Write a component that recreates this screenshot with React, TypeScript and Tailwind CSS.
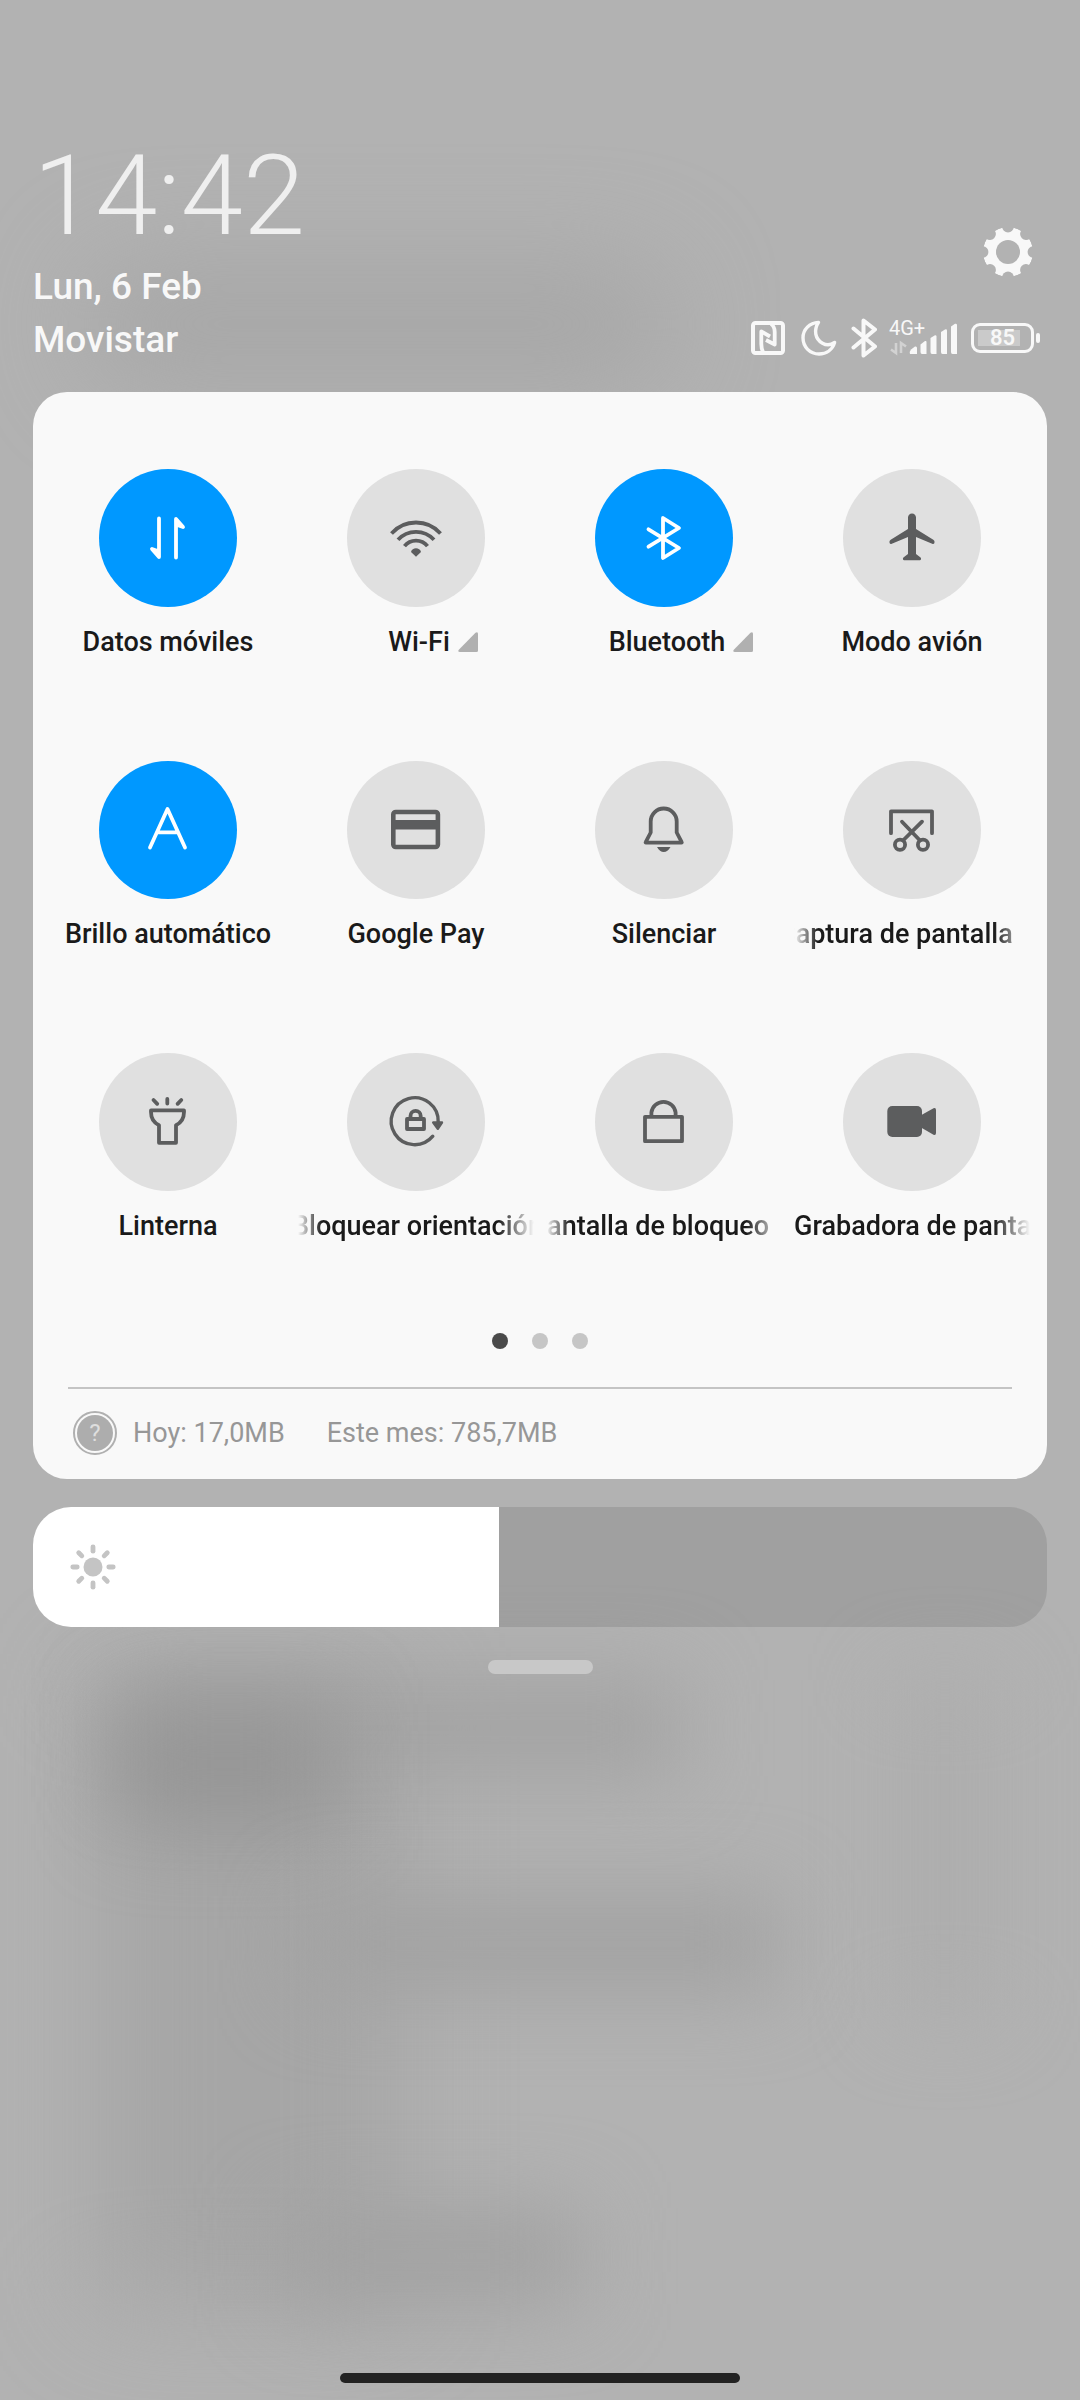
import React, { useState } from 'react';

type Tile = {
  label: string;
  icon: React.ReactNode;
  active?: boolean;
  // has a details page, shown by the small corner triangle
  expandable?: boolean;
  // how far the marquee has moved, set only for labels wider than the tile
  scroll?: number;
};

const Icon: React.FC<{ children: React.ReactNode }> = ({ children }) => (
  <svg
    viewBox="-30 -30 60 60"
    className="w-[60px] h-[60px]"
    fill="none"
    stroke="currentColor"
    strokeWidth="3.8"
    strokeLinecap="round"
    strokeLinejoin="round"
    aria-hidden="true"
  >
    {children}
  </svg>
);

const DataIcon = () => (
  <Icon>
    <path d="M-9 -19.5V19L-16 11L-9 13.5" fill="currentColor" />
    <path d="M8 19.5V-19L15 -11L8 -13.5" fill="currentColor" />
  </Icon>
);

const WifiIcon = () => (
  <Icon>
    <g strokeLinecap="butt">
      <path d="M-24.5 -4.5A32.8 32.8 0 0 1 24.5 -4.5" />
      <path d="M-18 1.8A24.3 24.3 0 0 1 18 1.8" />
      <path d="M-11.5 8.2A14.6 14.6 0 0 1 11.5 8.2" />
    </g>
    <path d="M-5 14C-4 9 4 9 5 14L0 18.8Z" fill="currentColor" stroke="none" />
  </Icon>
);

const BluetoothIcon = () => (
  <Icon>
    <path d="M-15.5 -8.7L15 10L-1 20V-20L15 -10L-15.5 8.7" />
  </Icon>
);

const PlaneIcon = () => (
  <Icon>
    <path
      d="M0 -24.5C-2.4 -24.5 -4 -22.6 -4 -20.5V-9L-21.3 1.8C-22.6 2.7 -22.8 4 -22.3 5.2C-22 6 -21.2 6.2 -20.2 5.8L-4 -1V16L-8.6 19.5C-9.6 20.6 -9 22.3 -7.8 22.3H7.8C9 22.3 9.6 20.6 8.6 19.5L4 16V-1L20.2 5.8C21.2 6.2 22 6 22.3 5.2C22.8 4 22.6 2.7 21.3 1.8L4 -9V-20.5C4 -22.6 2.4 -24.5 0 -24.5Z"
      fill="currentColor"
      stroke="none"
    />
  </Icon>
);

const AutoBrightnessIcon = () => (
  <Icon>
    <path d="M-18 17.5L-0.5 -21L17 17.5M-10 2.3H9" />
  </Icon>
);

const CardIcon = () => (
  <Icon>
    <rect x="-22.7" y="-18" width="44.6" height="35" rx="2.5" strokeWidth="4.6" />
    <path d="M-22 -5.2H21" strokeWidth="9.6" strokeLinecap="butt" />
  </Icon>
);

const BellIcon = () => (
  <Icon>
    <path d="M-13.3 2.5V-8.5A13 13 0 0 1 12.7 -8.5V2.5L17.7 12.2Q18 12.7 17.4 12.7H-18Q-18.6 12.7 -18.3 12.2Z" />
    <path d="M-7 17H6.5C4.5 20.5 2.5 22 -0.3 22C-3 22 -5 20.5 -7 17Z" fill="currentColor" stroke="none" />
  </Icon>
);

const ScreenshotIcon = () => (
  <Icon>
    <path d="M-21 3.2V-18.7H20V3.2" />
    <path d="M-10 -8.3L8 10.5M10 -8.3L-9 10.5" />
    <circle cx="-12" cy="14.7" r="5.1" />
    <circle cx="11" cy="14.7" r="5.1" />
  </Icon>
);

const TorchIcon = () => (
  <Icon>
    <path d="M-0.7 -23V-18.5M-14.5 -22L-10.8 -18.2M13.3 -22L9.6 -18.2" />
    <path d="M-17 -11.6H16V-10C16 -3 12.5 1 8 3.2V20.8H-9V3.2C-13.5 1 -17 -3 -17 -10Z" />
  </Icon>
);

const RotationLockIcon = () => (
  <Icon>
    <path d="M22.2 0A23.5 23.5 0 1 0 16.8 14.2" strokeWidth="3.4" />
    <path d="M17.2 0.5H26L21.8 6.8Z" fill="currentColor" strokeWidth="2.4" />
    <rect x="-9" y="-3" width="17" height="10" />
    <path d="M-5.5 -4V-6A5 5 0 0 1 4.7 -6V-4" />
  </Icon>
);

const LockIcon = () => (
  <Icon>
    <rect x="-19" y="-5.2" width="37" height="24.4" />
    <path d="M-12.6 -6V-9.5A12.2 12.2 0 0 1 11.6 -9.5V-6" />
  </Icon>
);

const CameraIcon = () => (
  <Icon>
    <g fill="currentColor" stroke="none">
      <rect x="-24.7" y="-16" width="34.7" height="31" rx="5" />
      <path d="M9 -6.8L21.5 -13.8Q24 -14.6 24 -12V11Q24 13.6 21.5 12.8L9 5.4Z" />
    </g>
  </Icon>
);

const tiles: Tile[] = [
  { label: 'Datos móviles', icon: <DataIcon />, active: true },
  { label: 'Wi-Fi', icon: <WifiIcon />, expandable: true },
  { label: 'Bluetooth', icon: <BluetoothIcon />, active: true, expandable: true },
  { label: 'Modo avión', icon: <PlaneIcon /> },
  { label: 'Brillo automático', icon: <AutoBrightnessIcon />, active: true },
  { label: 'Google Pay', icon: <CardIcon /> },
  { label: 'Silenciar', icon: <BellIcon /> },
  { label: 'Captura de pantalla', icon: <ScreenshotIcon />, scroll: 16 },
  { label: 'Linterna', icon: <TorchIcon /> },
  { label: 'Bloquear orientación', icon: <RotationLockIcon />, scroll: 6 },
  { label: 'Pantalla de bloqueo', icon: <LockIcon />, scroll: 16 },
  { label: 'Grabadora de pantalla', icon: <CameraIcon />, scroll: 0 },
];

const TileLabel: React.FC<{ tile: Tile }> = ({ tile }) => {
  if (tile.scroll !== undefined) {
    // the left edge fades only once the text has started to move
    const fade = tile.scroll > 0
      ? '[mask-image:linear-gradient(to_right,transparent,black_24px,black_calc(100%-36px),transparent)]'
      : '[mask-image:linear-gradient(to_right,black_calc(100%-36px),transparent)]';
    return (
      <span className="block w-full px-[6px]">
        <span className={`block overflow-hidden whitespace-nowrap text-left ${fade}`}>
          <span className="inline-block" style={{ marginLeft: -tile.scroll }}>{tile.label}</span>
        </span>
      </span>
    );
  }
  if (tile.expandable) {
    return (
      <span className="flex items-center justify-center gap-2 pl-[34px]">
        {tile.label}
        <svg viewBox="0 0 20 20" className="w-5 h-5 text-[#b0b0b0]" fill="currentColor" aria-hidden="true">
          <path d="M17.5 0.8Q20 -0.6 20 2V18.5Q20 20 18.5 20H1.8Q-0.6 20 0.8 17.8Z" />
        </svg>
      </span>
    );
  }
  return <span className="whitespace-nowrap">{tile.label}</span>;
};

const QuickTile: React.FC<{ tile: Tile }> = ({ tile }) => (
  <button type="button" aria-pressed={!!tile.active} className="flex flex-col items-center min-w-0">
    <span
      className={`w-[138px] h-[138px] rounded-full flex items-center justify-center ${
        tile.active ? 'bg-[#0098ff] text-white' : 'bg-[#e0e0e0] text-[#5c5d5e]'
      }`}
    >
      {tile.icon}
    </span>
    <span className="w-full mt-[19px] text-[27px] leading-8 font-medium text-[#1a1a1a]">
      <TileLabel tile={tile} />
    </span>
  </button>
);

const GearIcon = () => (
  <svg viewBox="-25 -25 50 50" className="w-[50px] h-[50px]" aria-hidden="true">
    <mask id="gear" maskUnits="userSpaceOnUse" x="-25" y="-25" width="50" height="50">
      <circle r="25" fill="white" />
      <circle r="12" fill="black" />
      {[0, 45, 90, 135, 180, 225, 270, 315].map((a) => (
        <ellipse key={a} cx="0" cy="-25" rx="5.8" ry="5.4" fill="black" transform={`rotate(${a})`} />
      ))}
    </mask>
    <circle r="25" fill="currentColor" mask="url(#gear)" />
  </svg>
);

const StatusIcons = () => (
  <div className="flex items-center h-10">
    {/* NFC */}
    <svg viewBox="0 0 34 34" className="w-[34px] h-[34px]" fill="none" stroke="currentColor" strokeWidth="3.8" strokeLinejoin="round" aria-label="NFC">
      <rect x="2" y="2" width="30" height="30" rx="2.5" strokeWidth="4" />
      <path d="M12 31C10.5 28 10.3 26 10.3 23V10.5L19 15.5" />
      <path d="M20 3C23 5 23.7 7.5 23.7 11V23.5L15 19" />
    </svg>
    {/* Do not disturb */}
    <svg viewBox="0 0 36 36" className="w-9 h-9 ml-4" fill="none" stroke="currentColor" strokeWidth="3.4" strokeLinejoin="round" aria-label="No molestar">
      <path d="M17.5 2.4C8.5 2.8 2 9.5 2 17.8C2 27 9 34 18 34C25.5 34 31.5 29.5 33.6 22.5C30 25 25.5 25.5 21.5 23.2C14 19 12.5 10 17.5 2.4Z" />
    </svg>
    <svg viewBox="-13 -20 26 40" className="w-[26px] h-10 ml-[14px]" fill="none" stroke="currentColor" strokeWidth="4" strokeLinecap="round" strokeLinejoin="round" aria-label="Bluetooth">
      <path d="M-10.5 -9.5L11 8.5L-0.5 17.5V-17.5L11 -8.5L-10.5 9.5" />
    </svg>
    {/* Mobile network */}
    <div className="ml-3 w-[69px] h-10 relative">
      <span className="absolute left-0 top-0 text-[20px] leading-5">4G+</span>
      <svg viewBox="-1 0 69 40" className="w-full h-full" fill="currentColor" aria-hidden="true">
        <path d="M6 25V35L1 31.5M11 35V25L16 28.5" fill="none" stroke="currentColor" strokeWidth="2.6" opacity="0.45" />
        <path d="M20 36Q19 34 21 31.5L25 28.5Q27 28 27 30V36Z" />
        <path d="M30.5 34V26.5L35 23Q36.5 22.5 36.5 24V36H32Q30.5 36 30.5 34Z" />
        <path d="M40.5 34V20L45 17.2Q46.5 17 46.5 18.5V36H42Q40.5 36 40.5 34Z" />
        <path d="M51 34V14L55 11.4Q57 11 57 12.5V36H52.5Q51 36 51 34Z" />
        <path d="M61 34V8.5L65 5.8Q67 5.5 67 7V36H62.5Q61 36 61 34Z" />
      </svg>
    </div>
    {/* Battery */}
    <div className="flex items-center gap-[2px] ml-[13px]">
      <div className="w-[63px] h-[30px] rounded-[9px] border-3 border-current p-[4px]">
        <div className="h-full flex items-center justify-center bg-[linear-gradient(to_right,#cacaca_85%,transparent_85%)] text-[22px] leading-none font-semibold">
          85
        </div>
      </div>
      <div className="w-1 h-[10px] rounded-[2px] bg-current" />
    </div>
  </div>
);

const Header = () => (
  <header className="flex items-end justify-between text-[#f8f8f8]">
    <div>
      <div className="text-[112px] leading-[112px] font-light text-[#efefef]">14:42</div>
      <div className="mt-2 text-[37px] leading-[53px] font-medium">
        <p>Lun, 6 Feb</p>
        <p>Movistar</p>
      </div>
    </div>
    <div className="flex flex-col items-end gap-[41px] pb-2 pr-[7px]">
      <button type="button" aria-label="Ajustes" className="mr-[7px]">
        <GearIcon />
      </button>
      <StatusIcons />
    </div>
  </header>
);

const BrightnessSlider = () => {
  const [value, setValue] = useState(46);

  return (
    <div className="relative mt-7">
      <input
        type="range"
        min={0}
        max={100}
        value={value}
        onChange={(e) => setValue(Number(e.target.value))}
        aria-label="Brillo"
        className="block w-full h-[120px] rounded-[38px] appearance-none [&::-webkit-slider-thumb]:opacity-0"
        style={{ background: `linear-gradient(to right, #fff ${value}%, rgba(0,0,0,0.1) ${value}%)` }}
      />
      <svg
        viewBox="-24 -24 48 48"
        className="absolute left-[36px] top-9 w-12 h-12 text-[#c4c4c4] pointer-events-none"
        stroke="currentColor"
        strokeWidth="4.8"
        strokeLinecap="round"
        aria-hidden="true"
      >
        <circle r="9.5" fill="currentColor" stroke="none" />
        {[0, 45, 90, 135, 180, 225, 270, 315].map((a) => (
          <path key={a} d="M0 -15.8V-20.2" transform={`rotate(${a})`} />
        ))}
      </svg>
    </div>
  );
};

// Blurred shapes of the app that is open behind the shade
const Backdrop = () => (
  <div className="absolute inset-0 -z-10 overflow-hidden bg-[#b2b2b2]" aria-hidden="true">
    <div className="absolute left-[8%] top-[11%] w-[54%] h-[5%] bg-[#a7a7a7] rounded-full blur-[50px]" />
    <div className="absolute left-[9%] top-[70%] w-[28%] h-[26%] bg-[#a6a6a6] blur-[50px]" />
    <div className="absolute left-[11%] top-[70%] w-[52%] h-[4%] bg-[#a3a3a3] blur-[40px]" />
    <div className="absolute left-[11%] top-[71%] w-[20%] h-[5%] bg-[#969696] blur-[40px]" />
    <div className="absolute left-[28%] top-[79%] w-[44%] h-[4%] bg-[#a2a2a2] blur-[40px]" />
    <div className="absolute left-[26%] top-[92%] w-[28%] h-[4%] bg-[#a2a2a2] blur-[40px]" />
    <div className="absolute left-[83%] top-[70%] w-[9%] h-[14%] bg-[#adadad] blur-[40px]" />
  </div>
);

const App: React.FC = () => {
  return (
    <div className="relative isolate min-h-screen flex flex-col px-[33px] pt-[140px] pb-[17px] font-[Roboto,sans-serif]">
      <Backdrop />
      <Header />

      <main className="mt-[26px]">
        <section className="bg-[#f9f9f9] rounded-[34px] pt-[77px] pb-6">
          <div className="grid grid-cols-4 gap-y-[103px] px-[11px]">
            {tiles.map((tile) => (
              <QuickTile key={tile.label} tile={tile} />
            ))}
          </div>

          {/* Pager */}
          <div className="flex justify-center gap-6 mt-[91px]">
            <span className="w-4 h-4 rounded-full bg-[#4a4a4a]" />
            <span className="w-4 h-4 rounded-full bg-[#c6c6c6]" />
            <span className="w-4 h-4 rounded-full bg-[#c6c6c6]" />
          </div>

          {/* Data usage */}
          <div className="mx-[35px] mt-[38px] border-t-2 border-[#c4c4c4] pt-[22px] pl-[5px] flex items-center text-[27px] leading-8 text-[#979797]">
            <button type="button" aria-label="Ayuda" className="w-11 h-11 rounded-full border-2 border-[#b0b0b0] p-[2px]">
              <span className="w-full h-full rounded-full bg-[#adadad] text-[#dedede] text-[24px] leading-none flex items-center justify-center">?</span>
            </button>
            <span className="ml-4">Hoy: 17,0MB</span>
            <span className="ml-[42px]">Este mes: 785,7MB</span>
          </div>
        </section>

        <BrightnessSlider />
        <div className="w-[105px] h-[14px] rounded-full bg-[#c8c8c8] mx-auto mt-[33px]" />
      </main>

      <div className="w-[400px] h-[10px] rounded-full bg-[#222222] mx-auto mt-auto" />
    </div>
  );
};

export default App;
